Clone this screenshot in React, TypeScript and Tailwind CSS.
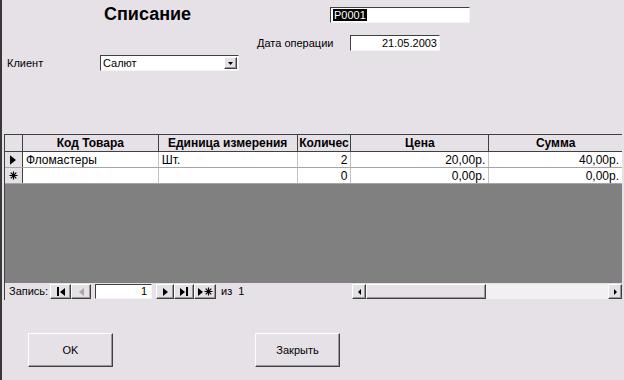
const sunken = "bg-white border-t border-l border-t-[#404040] border-l-[#404040] border-b border-r border-b-[#f4f4f4] border-r-[#f4f4f4]";
const raised = "bg-[#e6e1e6] border-t border-l border-t-white border-l-white border-b border-r border-b-[#404040] border-r-[#404040] shadow-[inset_-1px_-1px_0_#9a969a]";

const columns = [
  { title: "Код Товара", w: "w-[136px]" },
  { title: "Единица измерения", w: "w-[139px]" },
  { title: "Количес", w: "w-[54px]" },
  { title: "Цена", w: "w-[138px]" },
  { title: "Сумма", w: "w-[133px]" },
];

const rows = [
  { marker: "current", cells: ["Фломастеры", "Шт.", "2", "20,00р.", "40,00р."] },
  { marker: "new", cells: ["", "", "0", "0,00р.", "0,00р."] },
];

const TriRight = ({ gray = false, big = false }: { gray?: boolean; big?: boolean }) => (
  <svg width={big ? 6 : 5} height={big ? 10 : 8} viewBox="0 0 5 8">
    <path d="M0 0 L5 4 L0 8 Z" fill={gray ? "#a8a4a8" : "#000"} />
  </svg>
);

const TriLeft = ({ gray = false }: { gray?: boolean }) => (
  <svg width="5" height="8" viewBox="0 0 5 8">
    <path d="M5 0 L0 4 L5 8 Z" fill={gray ? "#a8a4a8" : "#000"} />
  </svg>
);

const Star = () => (
  <svg width="9" height="9" viewBox="0 0 9 9" stroke="#000" strokeWidth="1.2">
    <path d="M4.5 0.5 V8.5 M0.5 4.5 H8.5 M1.7 1.7 L7.3 7.3 M7.3 1.7 L1.7 7.3" />
  </svg>
);

const NavBtn = ({ children, w = "w-[20px]" }: { children: React.ReactNode; w?: string }) => (
  <div className={`${raised} ${w} h-[15px] flex items-center justify-center gap-[1px]`}>{children}</div>
);

export default function App() {
  return (
    <div
      className="w-[624px] h-[380px] bg-[#e6e1e6] border-l-2 border-[#383838] flex flex-col text-black text-[11px] overflow-hidden"
      style={{ fontFamily: '"Liberation Sans", Arial, sans-serif' }}
    >
      {/* form header */}
      <div className="h-[134px] flex flex-col">
        <div className="mt-[7px] h-[16px] flex items-center">
          <div className="ml-[102px] w-[226px] text-[18px] font-bold leading-[16px] -mt-[3px]">Списание</div>
          <div className={`${sunken} w-[140px] h-[16px] flex items-center px-[2px]`}>
            <span className="bg-black text-white leading-[12px] px-[1px]">P0001</span>
          </div>
        </div>
        <div className="mt-[12px] h-[16px] flex items-center">
          <div className="ml-[255px] w-[93px]">Дата операции</div>
          <div className={`${sunken} w-[90px] h-[16px] flex items-center justify-end pr-[2px]`}>21.05.2003</div>
        </div>
        <div className="mt-[4px] h-[16px] flex items-center">
          <div className="ml-[5px] w-[93px]">Клиент</div>
          <div className={`${sunken} w-[139px] h-[16px] flex items-center justify-between pl-[2px] pr-[1px]`}>
            <span>Салют</span>
            <div className={`${raised} w-[13px] h-[12px] flex items-center justify-center`}>
              <svg width="5" height="3" viewBox="0 0 5 3">
                <path d="M0 0 H5 L2.5 3 Z" fill="#000" />
              </svg>
            </div>
          </div>
        </div>
      </div>

      {/* datasheet */}
      <div className="ml-[2px] w-[618px] flex flex-col border-t border-l border-[#404040]">
        <div className="flex h-[17px] border-b border-[#404040]">
          <div className="w-[18px] border-r border-[#404040]" />
          {columns.map((c) => (
            <div
              key={c.title}
              className={`${c.w} border-r border-[#404040] last:border-r-0 flex items-center justify-center font-bold text-[12px] overflow-hidden whitespace-nowrap`}
            >
              {c.title}
            </div>
          ))}
        </div>
        {rows.map((r, i) => (
          <div key={i} className="flex h-[16px] border-b border-[#a8a4a8]">
            <div className="w-[18px] border-r border-[#404040] flex items-center justify-center">
              {r.marker === "current" ? <TriRight big /> : <Star />}
            </div>
            {r.cells.map((v, j) => (
              <div
                key={j}
                className={`${columns[j].w} bg-white border-r border-[#c4c0c4] last:border-r-0 flex items-center text-[12px] px-[3px] whitespace-nowrap ${j >= 2 ? "justify-end" : ""}`}
              >
                {v}
              </div>
            ))}
          </div>
        ))}
        <div className="h-[99px] bg-[#808080]" />
        <div className="h-[17px] flex items-center">
          <span className="ml-[4px] w-[41px]">Запись:</span>
          <NavBtn w="w-[21px]">
            <div className="w-[2px] h-[9px] bg-black" />
            <TriLeft />
          </NavBtn>
          <NavBtn w="w-[20px]">
            <TriLeft gray />
          </NavBtn>
          <div className={`${sunken} ml-[4px] w-[57px] h-[15px] flex items-center justify-end pr-[4px]`}>1</div>
          <div className="ml-[4px]" />
          <NavBtn w="w-[18px]">
            <TriRight />
          </NavBtn>
          <NavBtn w="w-[20px]">
            <TriRight />
            <div className="w-[2px] h-[9px] bg-black" />
          </NavBtn>
          <NavBtn w="w-[22px]">
            <TriRight />
            <Star />
          </NavBtn>
          <span className="ml-[5px] w-[131px]">из&nbsp; 1</span>
          <div className="flex h-[15px] w-[270px]">
            <div className={`${raised} w-[14px] h-[15px] flex items-center justify-center`}>
              <svg width="3" height="6" viewBox="0 0 3 6"><path d="M3 0 L0 3 L3 6 Z" fill="#000" /></svg>
            </div>
            <div className={`${raised} w-[120px] h-[15px]`} />
            <div className="flex-1 bg-[#f3f0f3]" />
            <div className={`${raised} w-[14px] h-[15px] flex items-center justify-center`}>
              <svg width="3" height="6" viewBox="0 0 3 6"><path d="M0 0 L3 3 L0 6 Z" fill="#000" /></svg>
            </div>
          </div>
        </div>
      </div>

      {/* buttons */}
      <div className="mt-[33px] flex">
        <button className={`${raised} ml-[26px] w-[85px] h-[34px] text-[11px]`}>OK</button>
        <button className={`${raised} ml-[142px] w-[85px] h-[34px] text-[11px]`}>Закрыть</button>
      </div>
    </div>
  );
}
